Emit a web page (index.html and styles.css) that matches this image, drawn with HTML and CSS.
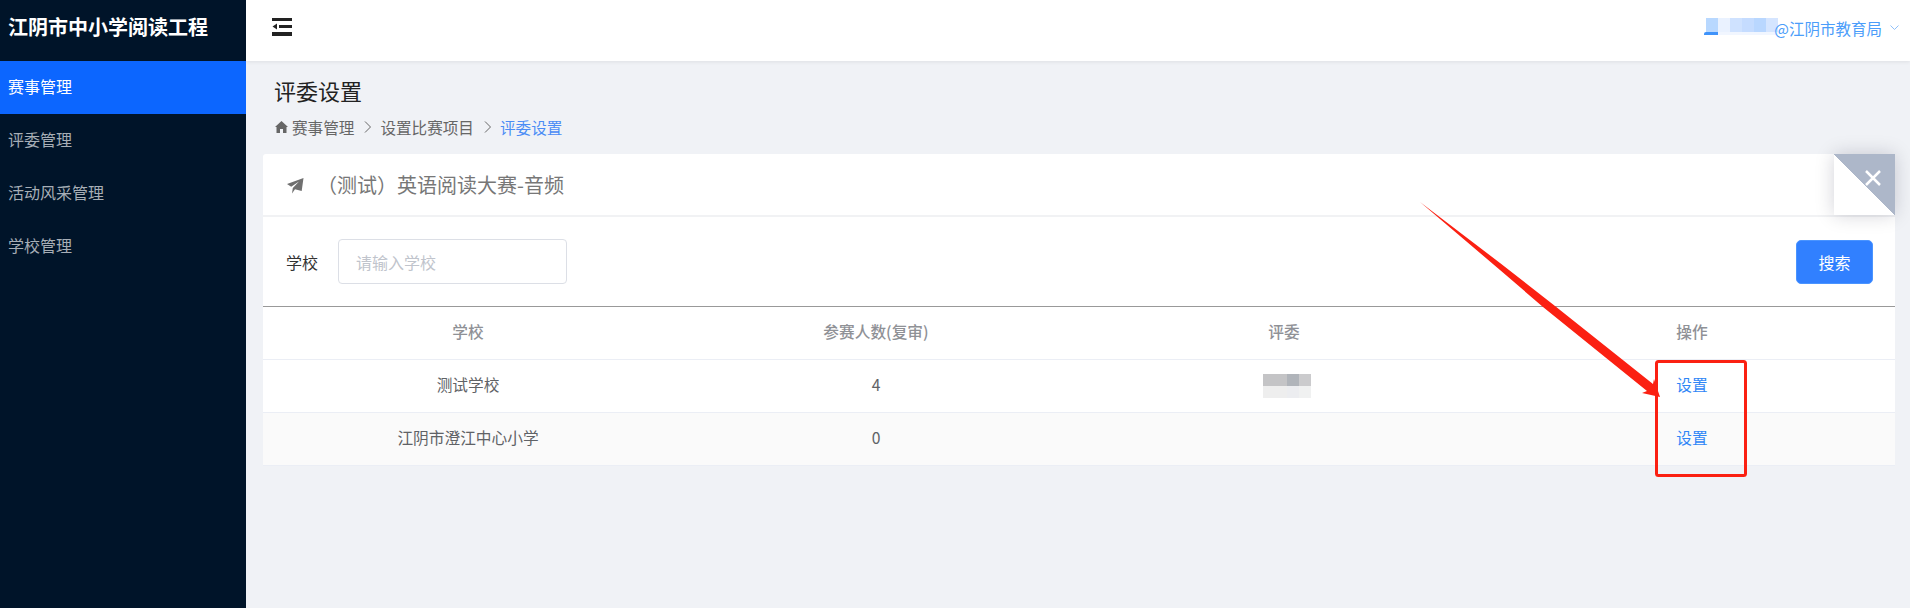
FILE: index.html
```html
<!DOCTYPE html>
<html lang="zh-CN">
<head>
    <meta charset="UTF-8">
    <title>评委设置</title>
    <link rel="stylesheet" href="styles.css">
</head>
<body>
    <aside class="sidebar">
        <div class="logo">江阴市中小学阅读工程</div>
        <ul class="menu">
            <li class="active">赛事管理</li>
            <li>评委管理</li>
            <li>活动风采管理</li>
            <li>学校管理</li>
        </ul>
    </aside>

    <div class="main">
        <header class="topbar">
            <svg class="menu-icon" width="20" height="18" viewBox="0 0 20 18">
                <path fill="#222" d="M0 0h20v3H0zM7 7h13v3H7zM0 14h20v4H0zM0.500 8.500L5 5.500v6z"/>
            </svg>
            <div class="user">
                <div class="mosaic-user">
                    <div class="mosaic-row">
                        <span class="u1"></span><span class="u2"></span><span class="u3"></span><span class="u4"></span><span class="u5"></span><span class="u6"></span>
                    </div>
                    <div class="mosaic-band">
                        <div class="mosaic-smear"></div>
                    </div>
                </div>
                <span class="user-name">@江阴市教育局</span>
                <svg class="caret" width="9" height="6" viewBox="0 0 9 6">
                    <path fill="none" stroke="#8fc0fa" stroke-width="1" d="M0.500 0.500L4.500 4.500L8.500 0.500"/>
                </svg>
            </div>
        </header>

        <div class="page-head">
            <h1>评委设置</h1>
            <div class="breadcrumb">
                <svg class="home" width="13" height="12" viewBox="0 0 13 12">
                    <path fill="#666" d="M6.500 0L13 6h-1.500v6H8V8H5v4H1.500V6H0z"/>
                </svg>
                <span>赛事管理</span>
                <svg class="sep" width="7" height="12" viewBox="0 0 7 12">
                    <path fill="none" stroke="#666" d="M1 0.500L6.500 6L1 11.500"/>
                </svg>
                <span>设置比赛项目</span>
                <svg class="sep" width="7" height="12" viewBox="0 0 7 12">
                    <path fill="none" stroke="#666" d="M1 0.500L6.500 6L1 11.500"/>
                </svg>
                <span class="current">评委设置</span>
            </div>
        </div>

        <section class="card">
            <div class="card-title">
                <svg class="plane" width="17" height="16" viewBox="0 0 17 16">
                    <path fill="#707070" d="M16.500 0L0 6L4.200 8.800L12 3.500L5.800 10L5 15.500L8 11.300L14.700 13z"/>
                </svg>
                <span>（测试）英语阅读大赛-音频</span>
            </div>
            <div class="close-corner">
                <svg width="16" height="16" viewBox="0 0 16 16">
                    <path fill="none" stroke="#fff" stroke-width="2.500" d="M1 1L15 15M15 1L1 15"/>
                </svg>
            </div>

            <form class="search-row">
                <label>学校</label>
                <input type="text" placeholder="请输入学校">
                <button type="button">搜索</button>
            </form>

            <table>
                <thead>
                    <tr><th>学校</th><th>参赛人数(复审)</th><th>评委</th><th>操作</th></tr>
                </thead>
                <tbody>
                    <tr>
                        <td>测试学校</td>
                        <td>4</td>
                        <td>
                            <div class="mosaic-judge">
                                <span class="j1"></span><span class="j1"></span><span class="j2"></span><span class="j3"></span>
                                <span class="j4"></span><span class="j4"></span><span class="j5"></span><span class="j6"></span>
                            </div>
                        </td>
                        <td><a href="#">设置</a></td>
                    </tr>
                    <tr class="striped">
                        <td>江阴市澄江中心小学</td>
                        <td>0</td>
                        <td></td>
                        <td><a href="#">设置</a></td>
                    </tr>
                </tbody>
            </table>
        </section>
    </div>

    <!-- red annotation drawn over the screenshot -->
    <svg class="annotation" width="1910" height="608" viewBox="0 0 1910 608">
        <polygon fill="#fb2012" points="1420,202 1500,263 1555,306 1653,384 1654,379 1660,397 1642,393 1647,391 1543,307 1500,270"/>
        <rect x="1656.500" y="361.500" width="89" height="114" rx="2" fill="none" stroke="#fb2012" stroke-width="3"/>
    </svg>
</body>
</html>
```

FILE: styles.css
```css
* {
    box-sizing: border-box;
}

html, body {
    height: 100%;
}

body {
    font-family: "Noto Sans CJK SC", "Liberation Sans", sans-serif;
    font-size: 16px;
    margin: 0;
    display: flex;
    background-color: #f0f2f6;
    color: #606266;
    overflow: hidden;
}

.sidebar {
    width: 246px;
    flex-shrink: 0;
    background-color: #001429;
}

.logo {
    height: 61px;
    padding-left: 8px;
    line-height: 54px;
    font-size: 20px;
    font-weight: bold;
    color: #fff;
    white-space: nowrap;
}

.menu {
    list-style: none;
    margin: 0;
    padding: 0;
}

.menu li {
    height: 53px;
    line-height: 50px;
    padding-left: 8px;
    color: #a7aeb6;
}

.menu li.active {
    background-color: #0c66ff;
    color: #fff;
}

.main {
    flex: 1;
    min-width: 0;
}

.topbar {
    height: 61px;
    display: flex;
    align-items: center;
    justify-content: space-between;
    padding: 0 11px 0 26px;
    background-color: #fff;
    box-shadow: 0 1px 4px rgba(0, 0, 0, 0.08);
}

.menu-icon {
    margin-bottom: 7px;
}

.user {
    display: flex;
    align-items: center;
    margin-bottom: 5px;
    color: #4b9dfa;
    font-size: 15.500px;
}

.mosaic-user {
    width: 72px;
    height: 17px;
    margin-bottom: 3px;
}

.mosaic-row {
    display: flex;
    height: 14px;
}

.mosaic-row span {
    width: 12px;
}

.u1 { background-color: #b8d8ff; }
.u2 { background-color: #eaf2ff; }
.u3 { background-color: #cfe2ff; }
.u4 { background-color: #c5dcff; }
.u5 { background-color: #b9d7ff; }
.u6 { background-color: #d5e5ff; }

.mosaic-band {
    height: 3px;
    background-color: #f1f6ff;
}

.mosaic-smear {
    width: 14px;
    height: 3px;
    margin-left: -2px;
    border-radius: 2px 0 0 0;
    background-color: #3f93fa;
}

.user-name {
    margin-left: -4px;
    white-space: nowrap;
}

.caret {
    margin-left: 8px;
}

.page-head {
    padding: 13px 0 0 28px;
    height: 93px;
}

.page-head h1 {
    margin: 0;
    font-size: 22px;
    font-weight: normal;
    line-height: 32px;
    color: #222;
}

.breadcrumb {
    display: flex;
    align-items: center;
    margin-top: 9px;
    line-height: 24px;
    font-size: 15.600px;
    color: #666;
}

.home {
    margin: 0 4px 0 1px;
}

.sep {
    margin: 0 9px 0 10px;
}

.breadcrumb .current {
    color: #4a8cf5;
}

.card {
    position: relative;
    margin: 0 15px 0 17px;
    background-color: #fff;
    border-radius: 3px 0 0 0;
}

.card-title {
    height: 63px;
    display: flex;
    align-items: center;
    padding-left: 24px;
    border-bottom: 2px solid #f1f2f4;
    font-size: 20px;
    color: #777;
}

.plane {
    margin-right: 13px;
    margin-top: 2px;
}

.close-corner {
    position: absolute;
    top: 0;
    right: 0;
    width: 61px;
    height: 61px;
    background: linear-gradient(45deg, #fff 50%, #adb7c9 50%);
    box-shadow: 0 0 18px rgba(0, 0, 40, 0.18);
}

.close-corner svg {
    position: absolute;
    top: 16px;
    right: 14px;
}

.search-row {
    height: 89px;
    display: flex;
    align-items: center;
    padding: 0 22px 0 23px;
}

.search-row label {
    margin-right: 20px;
    color: #333;
}

.search-row input {
    width: 229px;
    height: 45px;
    padding: 0 17px;
    border: 1px solid #dcdfe6;
    border-radius: 4px;
    font: inherit;
}

.search-row input::placeholder {
    color: #c0c4cc;
}

.search-row button {
    margin-left: auto;
    width: 77px;
    height: 44px;
    background-color: #3180ff;
    border: 1px solid #4a94ff;
    border-radius: 5px;
    font: inherit;
    color: #fff;
}

table {
    width: 100%;
    table-layout: fixed;
    border-collapse: collapse;
    border-top: 1px solid #999;
    text-align: center;
    font-size: 15.700px;
}

th, td {
    height: 53px;
    padding: 0 0 3px 2px;
    border-bottom: 1px solid #ebeef5;
}

th {
    font-weight: 500;
    color: #8f9196;
}

.striped {
    background-color: #fafafa;
}

td a {
    color: #2f86f6;
    text-decoration: none;
}

.mosaic-judge {
    display: grid;
    grid-template-columns: repeat(4, 12px);
    grid-auto-rows: 12px;
    justify-content: center;
    padding-left: 6px;
    margin-top: 3px;
}

.j1 { background-color: #c4c4c6; }
.j2 { background-color: #b0b4ba; }
.j3 { background-color: #cbcbcd; }
.j4 { background-color: #eeeeee; }
.j5 { background-color: #ecedf0; }
.j6 { background-color: #f0f1f1; }

.annotation {
    position: absolute;
    top: 0;
    left: 0;
    pointer-events: none;
}
```
